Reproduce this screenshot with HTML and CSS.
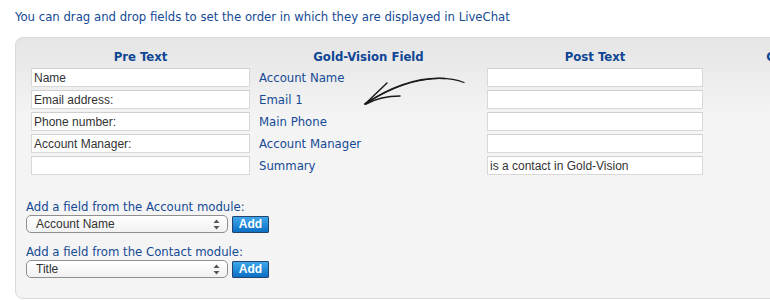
FILE: index.html
```html
<!DOCTYPE html>
<html>
<head>
<meta charset="utf-8">
<title>LiveChat fields</title>
<link rel="stylesheet" href="styles.css">
</head>
<body>
<p class="intro">You can drag and drop fields to set the order in which they are displayed in LiveChat</p>
<div class="panel">
  <div class="fields">
    <div class="head">Pre Text</div>
    <div class="head">Gold-Vision Field</div>
    <div class="head">Post Text</div>
    <div class="head">Gold-Vision Field</div>

    <input class="txt" type="text" value="Name">
    <div class="gv">Account Name</div>
    <input class="txt" type="text" value="">
    <div></div>

    <input class="txt" type="text" value="Email address:">
    <div class="gv">Email 1</div>
    <input class="txt" type="text" value="">
    <div></div>

    <input class="txt" type="text" value="Phone number:">
    <div class="gv">Main Phone</div>
    <input class="txt" type="text" value="">
    <div></div>

    <input class="txt" type="text" value="Account Manager:">
    <div class="gv">Account Manager</div>
    <input class="txt" type="text" value="">
    <div></div>

    <input class="txt" type="text" value="">
    <div class="gv">Summary</div>
    <input class="txt" type="text" value="is a contact in Gold-Vision">
    <div></div>
  </div>

  <svg class="arrow" width="120" height="44" viewBox="0 0 120 44">
    <path d="M109,12.5 C92,6 56,4 10,34" fill="none" stroke="#1b1b1b" stroke-width="1.3" stroke-linecap="round"/>
    <path d="M90,8.5 C66,7 40,14 10,34" fill="none" stroke="#1b1b1b" stroke-width="1.6" stroke-linecap="round"/>
    <path d="M10,34 L32,13" fill="none" stroke="#1b1b1b" stroke-width="1.5" stroke-linecap="round"/>
    <path d="M11,34 C22,28 34,26 45,26" fill="none" stroke="#1b1b1b" stroke-width="1.5" stroke-linecap="round"/>
  </svg>

  <div class="add">
    <label class="add-label">Add a field from the Account module:</label>
    <div class="add-row">
      <div class="select"><span>Account Name</span>
        <svg class="updown" width="7" height="11" viewBox="0 0 7 11"><path d="M3.5,0.5 L6.5,4 L0.5,4 Z M3.5,10.5 L6.5,7 L0.5,7 Z" fill="#555"/></svg>
      </div>
      <button class="btn" type="button">Add</button>
    </div>
    <label class="add-label second">Add a field from the Contact module:</label>
    <div class="add-row">
      <div class="select"><span>Title</span>
        <svg class="updown" width="7" height="11" viewBox="0 0 7 11"><path d="M3.5,0.5 L6.5,4 L0.5,4 Z M3.5,10.5 L6.5,7 L0.5,7 Z" fill="#555"/></svg>
      </div>
      <button class="btn" type="button">Add</button>
    </div>
  </div>
</div>
</body>
</html>
```
FILE: styles.css
```css
html, body {
  margin: 0;
  background: #ffffff;
  overflow: hidden;
}
body {
  font-family: "DejaVu Sans Condensed", "DejaVu Sans", sans-serif;
  font-size: 13px;
  color: #154a95;
}
.intro {
  margin: 0;
  padding: 8px 0 0 15px;
  line-height: 17px;
  white-space: nowrap;
}
.panel {
  position: relative;
  margin: 12px 0 0 15px;
  width: 800px;
  border: 1px solid #d9d9d9;
  border-radius: 8px 0 0 8px;
  background: linear-gradient(#e5e5e5, #f4f4f4 80px, #f4f4f4);
  padding: 10px 0 20px 10px;
}
.fields {
  display: grid;
  grid-template-columns: 219px 219px 216px 219px;
  column-gap: 9px;
  row-gap: 3px;
  margin-left: 5px;
}
.head {
  font-weight: bold;
  text-align: center;
  line-height: 17px;
  white-space: nowrap;
  color: #0e4694;
}
.txt {
  box-sizing: border-box;
  height: 19px;
  margin: 0;
  border: 1px solid #d8d8d8;
  border-top-color: #cfcfcf;
  background: #ffffff;
  font-family: "Liberation Sans", Arial, sans-serif;
  font-size: 12px;
  color: #333333;
  padding: 0 2px;
  outline: none;
}
.gv {
  line-height: 19px;
  white-space: nowrap;
}
.arrow {
  position: absolute;
  left: 339px;
  top: 32px;
}
.add {
  margin-top: 23px;
}
.add-label {
  display: block;
  line-height: 17px;
}
.add-label.second {
  margin-top: 10px;
}
.add-row {
  display: flex;
  align-items: center;
  gap: 4px;
  height: 18px;
}
.select {
  box-sizing: border-box;
  width: 202px;
  height: 18px;
  border: 1px solid #8f8f8f;
  border-radius: 5px;
  background: linear-gradient(#ffffff, #f1f1f1);
  display: flex;
  align-items: center;
  justify-content: space-between;
  padding: 0 7px 0 9px;
  font-family: "Liberation Sans", Arial, sans-serif;
  font-size: 12px;
  color: #333333;
}
.btn {
  box-sizing: border-box;
  width: 37px;
  height: 17px;
  margin: 0;
  padding: 0;
  border: 1px solid #23436e;
  border-radius: 1px;
  background: linear-gradient(#3ea7ea, #0b6fc4);
  color: #ffffff;
  font-family: "Liberation Sans", Arial, sans-serif;
  font-weight: bold;
  font-size: 12px;
  line-height: 15px;
}
```
